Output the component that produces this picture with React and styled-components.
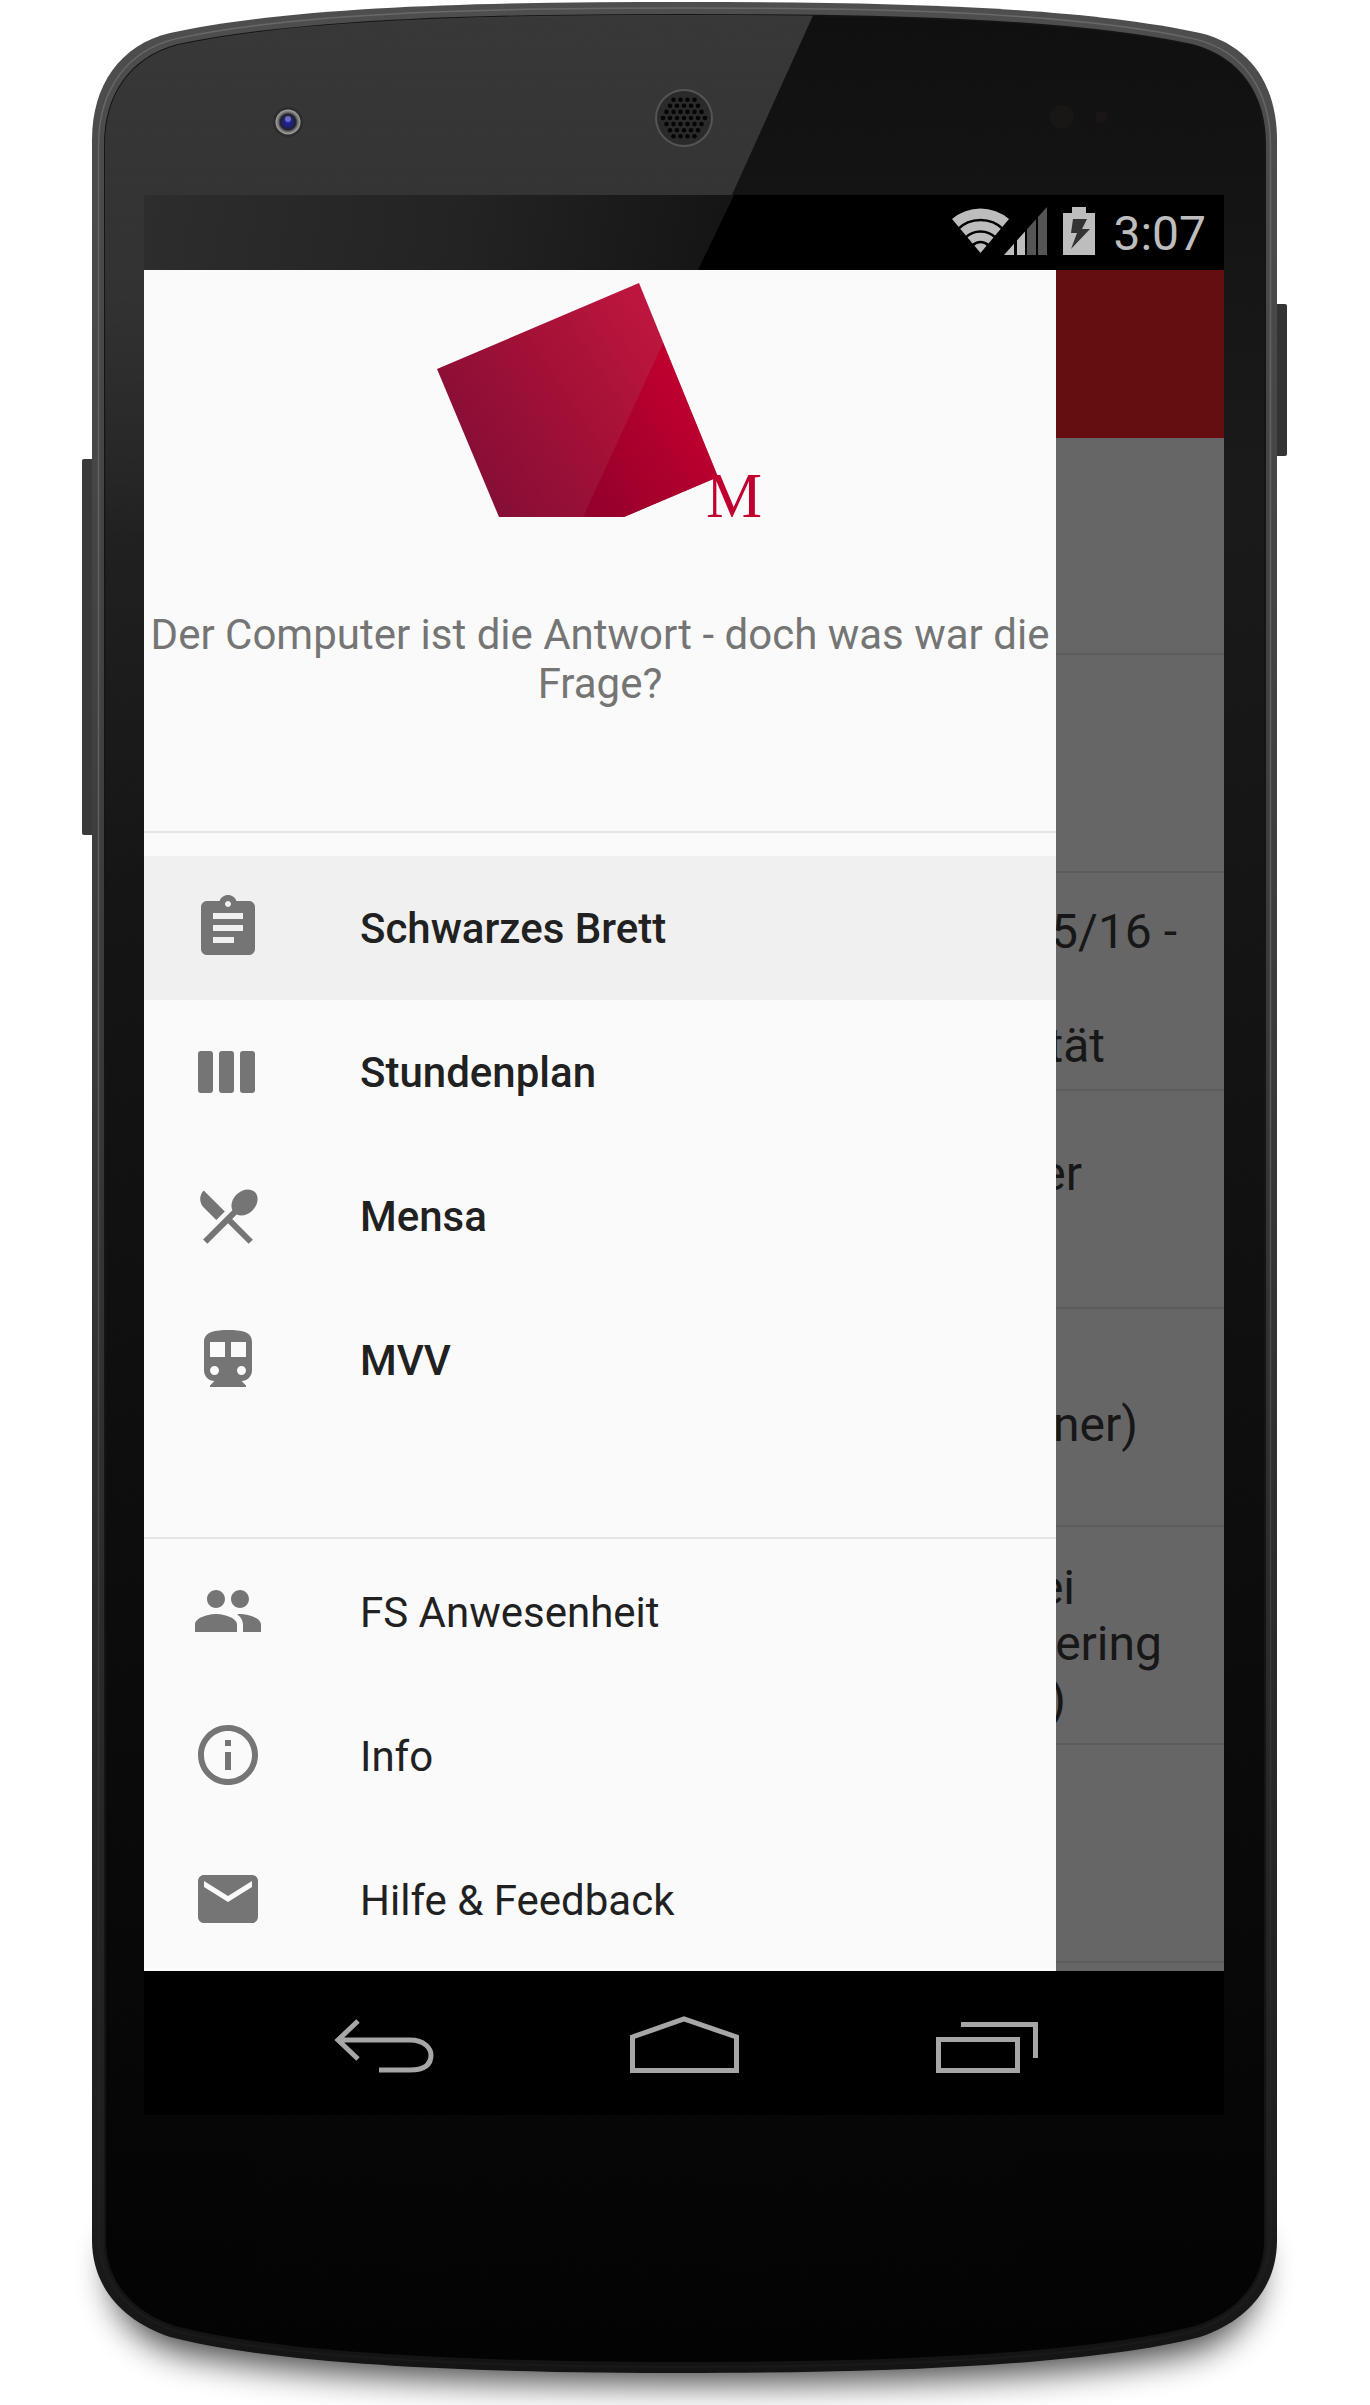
import React from 'react';
import styled, { createGlobalStyle } from 'styled-components';
import { MdLocalDining, MdPeople, MdInfoOutline, MdEmail } from 'react-icons/md';

const GlobalStyle = createGlobalStyle`
  html, body {
    margin: 0;
    padding: 0;
    background: #fff;
    font-family: Roboto, "Liberation Sans", sans-serif;
  }
`;

const Page = styled.div`
  position: relative;
  width: 1370px;
  height: 2405px;
  overflow: hidden;
  background: #fff;
`;

const Art = styled.svg`
  position: absolute;
  left: 0;
  top: 0;
  width: 1370px;
  height: 2405px;
`;

const Screen = styled.div`
  position: relative;
  display: flex;
  flex-direction: column;
  width: 1080px;
  margin-left: 144px;
  padding-top: 195px;
`;

const StatusBar = styled.div`
  position: relative;
  display: flex;
  justify-content: flex-end;
  align-items: flex-start;
  height: 65px;
  padding: 10px 18px 0 0;
  background: #000;
  &::before {
    content: '';
    position: absolute;
    inset: 0;
    clip-path: polygon(0 0, 590px 0, 554px 100%, 0 100%);
    background: linear-gradient(100deg, #2d2d2d 0%, #232323 30%, #141414 55%);
  }
`;

const StatusIcon = styled.svg`
  position: relative;
  display: block;
  flex: none;
  margin-left: ${p => p.$gap || 0}px;
`;

const Clock = styled.span`
  position: relative;
  margin: 1px 0 0 18px;
  font-size: 48px;
  line-height: 56px;
  color: #bdbdbd;
`;

const Content = styled.div`
  position: relative;
  height: 1701px;
  overflow: hidden;
  background: #666;
`;

const Toolbar = styled.div`
  height: 168px;
  background: #640e10;
`;

const List = styled.div`
  display: flex;
  flex-direction: column;
`;

const Row = styled.div`
  box-sizing: border-box;
  height: ${p => p.$height || 218}px;
  padding-top: ${p => p.$pad || 0}px;
  border-bottom: 2px solid #5c5c5c;
`;

const Line = styled.div`
  width: ${p => p.$end}px;
  margin-top: ${p => p.$top || 0}px;
  font-size: 48px;
  line-height: 56px;
  text-align: right;
  white-space: nowrap;
  color: #171717;
`;

const Drawer = styled.aside`
  position: absolute;
  left: 0;
  top: 0;
  bottom: 0;
  display: flex;
  flex-direction: column;
  width: 912px;
  background: #fafafa;
`;

const Header = styled.header`
  box-sizing: border-box;
  display: flex;
  flex-direction: column;
  align-items: center;
  height: 563px;
  padding-top: 10px;
  border-bottom: 2px solid #e4e4e4;
`;

const Logo = styled.svg`
  display: block;
  flex: none;
`;

const Quote = styled.p`
  margin: 70px 0 0;
  font-size: 42px;
  line-height: 49px;
  text-align: center;
  color: #757575;
`;

const Section = styled.nav`
  display: flex;
  flex-direction: column;
  height: ${p => p.$height}px;
  box-sizing: border-box;
  padding-top: ${p => p.$pad || 0}px;
  border-bottom: ${p => (p.$rule ? '2px solid #e4e4e4' : 'none')};
`;

const Item = styled.div`
  display: flex;
  align-items: center;
  flex: none;
  height: 144px;
  padding-left: 48px;
  background: ${p => (p.$active ? '#f0f0f0' : 'transparent')};
`;

const ItemIcon = styled.span`
  display: flex;
  flex: none;
  width: 72px;
  height: 72px;
  color: #757575;
  font-size: 72px;
`;

const ItemLabel = styled.span`
  margin: 2px 0 0 96px;
  font-size: 42px;
  line-height: 49px;
  font-weight: ${p => (p.$strong ? 500 : 400)};
  color: #212121;
`;

const NavBar = styled.div`
  display: flex;
  height: 144px;
  padding: 0 90px;
  background: #000;
`;

const NavButton = styled.div`
  display: flex;
  flex: 1;
  align-items: center;
  justify-content: center;
`;

const GLASS =
  'M105 145 C105 95 130 58 178 45 C305 18 500 15 685 15 C870 15 1065 18 1192 45 C1240 58 1265 95 1265 145 L1265 2240 C1265 2280 1240 2312 1195 2327 C1075 2358 850 2363 685 2363 C520 2363 295 2358 175 2327 C130 2312 105 2280 105 2240 Z';
const BODY =
  'M92 140 C92 85 120 45 170 33 C300 5 500 2 685 2 C870 2 1070 5 1200 33 C1250 45 1277 85 1277 140 L1277 2240 C1277 2285 1250 2320 1200 2337 C1080 2368 850 2373 685 2373 C520 2373 290 2368 170 2337 C120 2320 92 2285 92 2240 Z';

// hex grid of holes for the earpiece
const speakerHoles = () => {
  const holes = [];
  for (let r = -5; r <= 5; r++) {
    for (let c = -5; c <= 5; c++) {
      const x = c * 7 + (r % 2 ? 3.5 : 0);
      const y = r * 6.1;
      if (x * x + y * y < 24 * 24) holes.push(<circle key={`${r}-${c}`} cx={684 + x} cy={118 + y} r="2.3" />);
    }
  }
  return holes;
};

const DeviceArt = () => (
  <Art viewBox="0 0 1370 2405" aria-hidden="true">
    <defs>
      <linearGradient id="rim" x1="0" y1="0" x2="0" y2="1">
        <stop offset="0" stopColor="#4e4e4e" />
        <stop offset="0.3" stopColor="#414141" />
        <stop offset="0.7" stopColor="#2a2a2a" />
        <stop offset="0.92" stopColor="#1e1e1e" />
        <stop offset="1" stopColor="#141414" />
      </linearGradient>
      <linearGradient id="rimLine" x1="0" y1="0" x2="0" y2="1">
        <stop offset="0" stopColor="#686868" />
        <stop offset="0.45" stopColor="#5c5c5c" />
        <stop offset="0.8" stopColor="#2c2c2c" />
        <stop offset="1" stopColor="#1a1a1a" />
      </linearGradient>
      <linearGradient id="glass" x1="0" y1="0" x2="0" y2="1">
        <stop offset="0" stopColor="#101010" />
        <stop offset="0.2" stopColor="#1a1a1a" />
        <stop offset="0.6" stopColor="#0e0e0e" />
        <stop offset="1" stopColor="#030303" />
      </linearGradient>
      <linearGradient id="gloss" gradientUnits="userSpaceOnUse" x1="300" y1="0" x2="300" y2="900">
        <stop offset="0" stopColor="#fff" stopOpacity="0.17" />
        <stop offset="0.33" stopColor="#fff" stopOpacity="0.12" />
        <stop offset="0.6" stopColor="#fff" stopOpacity="0.03" />
        <stop offset="1" stopColor="#fff" stopOpacity="0" />
      </linearGradient>
      <clipPath id="glassClip">
        <path d={GLASS} />
      </clipPath>
      <filter id="shadowBlur" filterUnits="userSpaceOnUse" x="0" y="2100" width="1370" height="305">
        <feGaussianBlur stdDeviation="17" />
      </filter>
      <filter id="grain" filterUnits="userSpaceOnUse" x="92" y="0" width="1190" height="2380">
        <feTurbulence type="fractalNoise" baseFrequency="0.8" numOctaves="2" seed="4" />
        <feColorMatrix values="0 0 0 0 1  0 0 0 0 1  0 0 0 0 1  0.5 0 0 0 -0.2" />
      </filter>
      <radialGradient id="lens" cx="0.5" cy="0.5" r="0.5">
        <stop offset="0" stopColor="#2222aa" />
        <stop offset="0.45" stopColor="#20206a" />
        <stop offset="0.62" stopColor="#222" />
        <stop offset="0.8" stopColor="#777" />
        <stop offset="1" stopColor="#a5a5a5" />
      </radialGradient>
    </defs>

    <path
      d="M115 2240 L1255 2240 C1270 2300 1240 2338 1190 2352 C1060 2379 850 2383 685 2383 C520 2383 310 2379 180 2352 C130 2338 100 2300 115 2240 Z"
      fill="#000"
      opacity="0.72"
      filter="url(#shadowBlur)"
    />

    <rect x="82" y="459" width="14" height="376" rx="2" fill="#3a3a3a" />
    <rect x="1273" y="304" width="14" height="152" rx="2" fill="#333" />

    <path d={BODY} fill="url(#rim)" />
    <path
      d={BODY}
      fill="none"
      stroke="url(#rimLine)"
      strokeWidth="1.5"
      transform="translate(684.5 1187.5) scale(0.989 0.9949) translate(-684.5 -1187.5)"
    />
    <path d={GLASS} fill="url(#glass)" stroke="#141414" strokeWidth="2" />
    <g clipPath="url(#glassClip)">
      <polygon points="90,0 820,0 698,270 590,500 90,900" fill="url(#gloss)" />
      <rect x="92" y="0" width="1190" height="2380" filter="url(#grain)" opacity="0.05" />
    </g>

    <circle cx="288" cy="122" r="15" fill="#2c2c2c" />
    <circle cx="288" cy="122" r="12.5" fill="url(#lens)" />
    <circle cx="288" cy="119" r="3" fill="#8c8cd8" opacity="0.7" />

    <circle cx="684" cy="118" r="29" fill="#555" />
    <circle cx="684" cy="118" r="27" fill="#2a2a2a" />
    <g fill="#050505">{speakerHoles()}</g>

    <circle cx="1062" cy="117" r="12" fill="#191715" />
    <circle cx="1101" cy="117" r="6" fill="#1b1615" />
  </Art>
);

const SignalIcon = () => (
  <StatusIcon width="96" height="52" viewBox="952 205 96 52" aria-hidden="true">
    <defs>
      <clipPath id="signalClip">
        <polygon points="1004,255 1047,207 1047,255" />
      </clipPath>
    </defs>
    <path d="M980.5 253 L952 219 A44 44 0 0 1 1009 219 Z" fill="#bdbdbd" />
    <g fill="none" stroke="#000" strokeWidth="2.6">
      <circle cx="980.5" cy="253" r="33" />
      <circle cx="980.5" cy="253" r="21.5" />
      <circle cx="980.5" cy="253" r="11" />
    </g>
    <g clipPath="url(#signalClip)">
      <rect x="1004" y="205" width="10" height="52" fill="#bdbdbd" />
      <rect x="1017" y="205" width="8" height="52" fill="#bdbdbd" />
      <rect x="1027" y="205" width="9" height="52" fill="#555" />
      <rect x="1038" y="205" width="9" height="52" fill="#555" />
    </g>
  </StatusIcon>
);

const BatteryIcon = () => (
  <StatusIcon $gap={15} width="32" height="52" viewBox="1063 205 32 52" aria-hidden="true">
    <path d="M1072 207 H1086 V213 H1095 V255 H1063 V213 H1072 Z" fill="#bdbdbd" />
    <polygon points="1073,219 1087,219 1082,229 1090,229 1071,249 1077,233 1071,233" fill="#333" />
  </StatusIcon>
);

const BackIcon = () => (
  <svg width="120" height="72" viewBox="324 2007 120 72" aria-hidden="true">
    <path
      d="M358 2021 L338 2040 L358 2059 M338 2040 H410 C425 2040 431 2049 431 2055 C431 2064 425 2070 410 2070 H379"
      fill="none"
      stroke="#a6a6a6"
      strokeWidth="5"
    />
  </svg>
);

const HomeIcon = () => (
  <svg width="120" height="72" viewBox="624 2007 120 72" aria-hidden="true">
    <path d="M632.5 2070.5 V2037 L684 2019 L736.5 2037 V2070.5 Z" fill="none" stroke="#a6a6a6" strokeWidth="5" />
  </svg>
);

const RecentIcon = () => (
  <svg width="120" height="72" viewBox="924 2007 120 72" aria-hidden="true">
    <path d="M938.5 2039.5 H1017.5 V2070.5 H938.5 Z" fill="none" stroke="#a6a6a6" strokeWidth="5" />
    <path d="M961 2024.5 H1035.5 V2058" fill="none" stroke="#a6a6a6" strokeWidth="5" />
  </svg>
);

const GlyphIcon = ({ d }) => (
  <svg width="72" height="72" viewBox="0 0 24 24" fill="currentColor" fillRule="evenodd" aria-hidden="true">
    <path d={d} />
  </svg>
);

const ClipboardIcon = () => (
  <GlyphIcon d="M19 3h-4.18C14.4 1.84 13.3 1 12 1c-1.3 0-2.4.84-2.82 2H5c-1.1 0-2 .9-2 2v14c0 1.1.9 2 2 2h14c1.1 0 2-.9 2-2V5c0-1.1-.9-2-2-2zm-7 0c.55 0 1 .45 1 1s-.45 1-1 1-1-.45-1-1 .45-1 1-1zm2 14H7v-2h7v2zm3-4H7v-2h10v2zm0-4H7V7h10v2z" />
);

const ColumnsIcon = () => (
  <GlyphIcon d="M3 5h3a1 1 0 0 1 1 1v12a1 1 0 0 1-1 1H3a1 1 0 0 1-1-1V6a1 1 0 0 1 1-1zm7 0h3a1 1 0 0 1 1 1v12a1 1 0 0 1-1 1h-3a1 1 0 0 1-1-1V6a1 1 0 0 1 1-1zm7 0h3a1 1 0 0 1 1 1v12a1 1 0 0 1-1 1h-3a1 1 0 0 1-1-1V6a1 1 0 0 1 1-1z" />
);

const TrainIcon = () => (
  <GlyphIcon d="M12 2c-4 0-8 .5-8 4v9.5C4 17.43 5.57 19 7.5 19L6 20.5v.5h12v-.5L16.5 19c1.93 0 3.5-1.57 3.5-3.5V6c0-3.5-3.58-4-8-4zM7.5 17c-.83 0-1.5-.67-1.5-1.5S6.67 14 7.5 14s1.5.67 1.5 1.5S8.33 17 7.5 17zM11 11H6V6h5v5zm2 0V6h5v5h-5zm3.5 6c-.83 0-1.5-.67-1.5-1.5s.67-1.5 1.5-1.5 1.5.67 1.5 1.5-.67 1.5-1.5 1.5z" />
);

const CrestLogo = () => (
  <Logo width="360" height="260" viewBox="420 280 360 260" aria-hidden="false">
    <defs>
      <linearGradient id="crest" gradientUnits="userSpaceOnUse" x1="445" y1="470" x2="670" y2="320">
        <stop offset="0" stopColor="#810e36" />
        <stop offset="0.5" stopColor="#a21036" />
        <stop offset="1" stopColor="#c0173f" />
      </linearGradient>
      <linearGradient id="facet" gradientUnits="userSpaceOnUse" x1="590" y1="510" x2="710" y2="430">
        <stop offset="0" stopColor="#93002b" />
        <stop offset="1" stopColor="#bf002f" />
      </linearGradient>
    </defs>
    <polygon points="639,283 437,369 499,517 624,517 718,477" fill="url(#crest)" />
    <polygon points="663,343 718,477 624,517 583,517" fill="url(#facet)" />
    <text x="706" y="517" fontFamily="'Liberation Serif', serif" fontSize="63" fill="#c0002f">
      M
    </text>
  </Logo>
);

const rows = [
  { pad: 0, height: 217, lines: [] },
  { lines: [] },
  { pad: 31, lines: [{ end: 1033, text: '5/16 -' }, { end: 961, top: 58, text: 'tät' }] },
  { pad: 55, lines: [{ end: 938, text: 'er' }] },
  { pad: 88, lines: [{ end: 994, text: 'ner)' }] },
  {
    pad: 33,
    lines: [
      { end: 931, text: 'ei' },
      { end: 1018, text: 'ering' },
      { end: 922, text: ')' },
    ],
  },
  { lines: [] },
];

const primaryItems = [
  { icon: ClipboardIcon, label: 'Schwarzes Brett', active: true },
  { icon: ColumnsIcon, label: 'Stundenplan' },
  { icon: MdLocalDining, label: 'Mensa' },
  { icon: TrainIcon, label: 'MVV' },
];

const secondaryItems = [
  { icon: MdPeople, label: 'FS Anwesenheit' },
  { icon: MdInfoOutline, label: 'Info' },
  { icon: MdEmail, label: 'Hilfe & Feedback' },
];

const App = () => (
  <Page>
    <GlobalStyle />
    <DeviceArt />
    <Screen>
      <StatusBar>
        <SignalIcon />
        <BatteryIcon />
        <Clock>3:07</Clock>
      </StatusBar>
      <Content>
        <Toolbar />
        <List>
          {rows.map((row, i) => (
            <Row key={i} $pad={row.pad} $height={row.height}>
              {row.lines.map(line => (
                <Line key={line.text} $end={line.end} $top={line.top}>
                  {line.text}
                </Line>
              ))}
            </Row>
          ))}
        </List>
        <Drawer>
          <Header>
            <CrestLogo />
            <Quote>
              Der Computer ist die Antwort - doch was war die
              <br />
              Frage?
            </Quote>
          </Header>
          <Section $height={707} $pad={23} $rule>
            {primaryItems.map(({ icon: Icon, label, active }) => (
              <Item key={label} $active={active}>
                <ItemIcon>
                  <Icon />
                </ItemIcon>
                <ItemLabel $strong>{label}</ItemLabel>
              </Item>
            ))}
          </Section>
          <Section $height={432}>
            {secondaryItems.map(({ icon: Icon, label }) => (
              <Item key={label}>
                <ItemIcon>
                  <Icon />
                </ItemIcon>
                <ItemLabel>{label}</ItemLabel>
              </Item>
            ))}
          </Section>
        </Drawer>
      </Content>
      <NavBar>
        <NavButton>
          <BackIcon />
        </NavButton>
        <NavButton>
          <HomeIcon />
        </NavButton>
        <NavButton>
          <RecentIcon />
        </NavButton>
      </NavBar>
    </Screen>
  </Page>
);

export default App;
